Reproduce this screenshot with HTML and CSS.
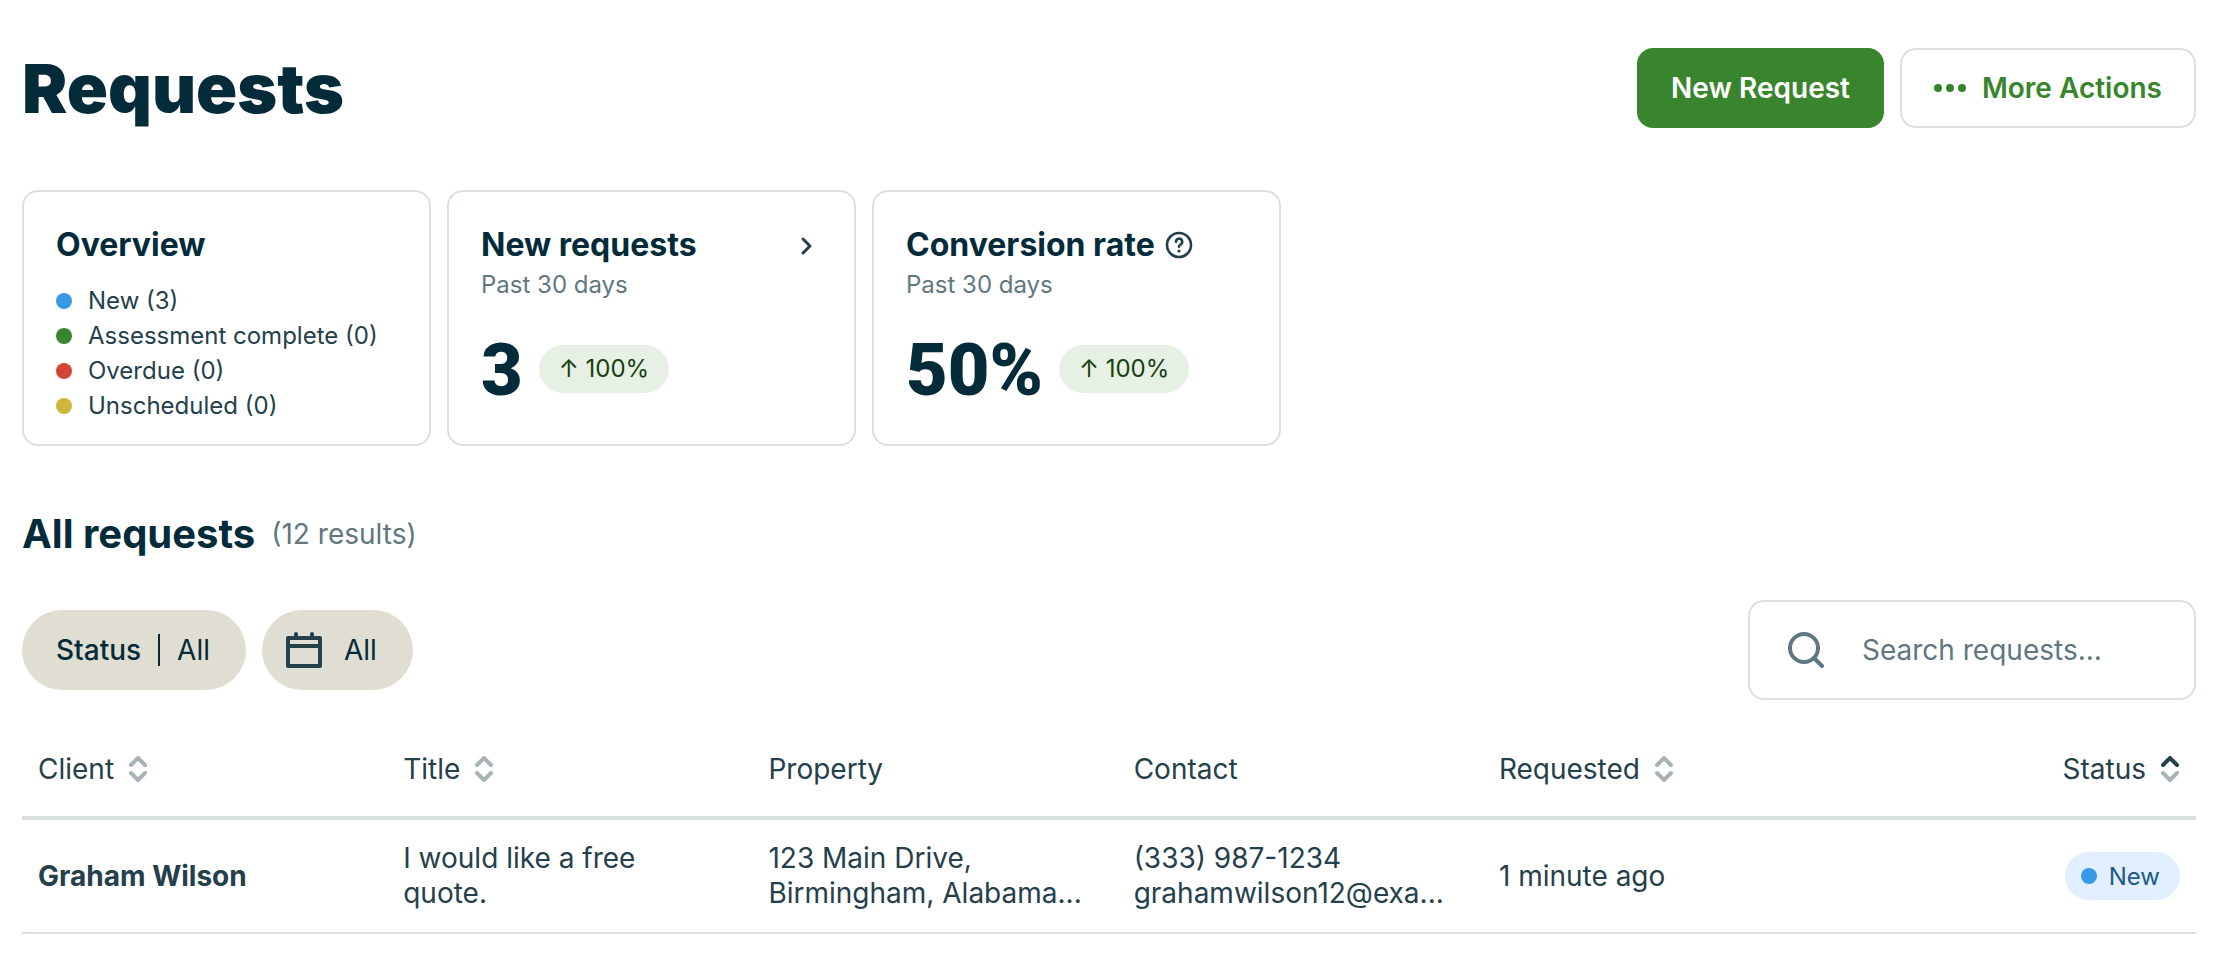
FILE: index.html
```html
<!DOCTYPE html>
<html lang="en">
<head>
    <meta charset="UTF-8">
    <meta name="viewport" content="width=device-width, initial-scale=1.0">
    <title>Requests</title>
    <link rel="stylesheet" href="styles.css">
</head>
<body>
    <header class="page-header">
        <h1>Requests</h1>
        <div class="actions">
            <button type="button" class="btn btn-primary">New Request</button>
            <button type="button" class="btn btn-secondary">
                <svg width="34" height="10" viewBox="0 0 34 10" fill="currentColor" aria-hidden="true">
                    <circle cx="4" cy="5" r="4"/><circle cx="16" cy="5" r="4"/><circle cx="28" cy="5" r="4"/>
                </svg>
                More Actions
            </button>
        </div>
    </header>

    <section class="cards">
        <div class="card">
            <h2>Overview</h2>
            <ul class="overview-list">
                <li><span class="dot dot-blue"></span>New (3)</li>
                <li><span class="dot dot-green"></span>Assessment complete (0)</li>
                <li><span class="dot dot-red"></span>Overdue (0)</li>
                <li><span class="dot dot-yellow"></span>Unscheduled (0)</li>
            </ul>
        </div>
        <a class="card" href="#new-requests">
            <div class="card-title">
                <h2>New requests</h2>
                <svg class="chevron" width="32" height="32" viewBox="0 0 32 32" fill="none" stroke="currentColor" stroke-width="3" stroke-linecap="round" stroke-linejoin="round" aria-hidden="true">
                    <path d="M13 10l7 7-7 7"/>
                </svg>
            </div>
            <p class="period">Past 30 days</p>
            <div class="metric"><strong>3</strong><span class="trend">↑ 100%</span></div>
        </a>
        <div class="card">
            <div class="card-title">
                <h2>Conversion rate</h2>
                <svg width="28" height="28" viewBox="0 0 28 28" fill="none" stroke="currentColor" stroke-width="2.6" stroke-linecap="round" stroke-linejoin="round" aria-hidden="true">
                    <circle cx="14" cy="14" r="12"/>
                    <path d="M11 10.8a3.1 3.1 0 1 1 4.6 2.7c-1 .6-1.6 1.1-1.6 2.3"/>
                    <circle cx="14" cy="20" r="1.6" fill="currentColor" stroke="none"/>
                </svg>
            </div>
            <p class="period">Past 30 days</p>
            <div class="metric"><strong>50%</strong><span class="trend">↑ 100%</span></div>
        </div>
    </section>

    <section>
        <div class="list-title">
            <h2>All requests</h2>
            <span>(12 results)</span>
        </div>

        <div class="toolbar">
            <div class="filters">
                <button type="button" class="chip"><span class="chip-label">Status</span><span class="chip-divider"></span>All</button>
                <button type="button" class="chip chip-date" aria-label="Date: All">
                    <svg width="36" height="36" viewBox="0 0 36 36" fill="none" stroke="currentColor" stroke-width="4" stroke-linecap="round" stroke-linejoin="round" aria-hidden="true">
                        <path d="M2 6h32v28H2zM2 14h32M10 2v4M26 2v4"/>
                    </svg>
                    All
                </button>
            </div>
            <label class="search">
                <svg width="36" height="36" viewBox="0 0 36 36" fill="none" stroke="currentColor" stroke-width="4" stroke-linecap="round" aria-hidden="true">
                    <circle cx="16" cy="16" r="14"/>
                    <path d="M26 26l8 8"/>
                </svg>
                <input type="search" placeholder="Search requests..." aria-label="Search requests">
            </label>
        </div>

        <table class="requests">
            <thead>
                <tr>
                    <th scope="col"><button type="button" class="sort">Client
                        <svg width="20" height="26" viewBox="0 0 20 26" aria-hidden="true"><path class="up" d="M3 9l7-7 7 7"/><path class="down" d="M3 17l7 7 7-7"/></svg></button></th>
                    <th scope="col"><button type="button" class="sort">Title
                        <svg width="20" height="26" viewBox="0 0 20 26" aria-hidden="true"><path class="up" d="M3 9l7-7 7 7"/><path class="down" d="M3 17l7 7 7-7"/></svg></button></th>
                    <th scope="col">Property</th>
                    <th scope="col">Contact</th>
                    <th scope="col"><button type="button" class="sort">Requested
                        <svg width="20" height="26" viewBox="0 0 20 26" aria-hidden="true"><path class="up" d="M3 9l7-7 7 7"/><path class="down" d="M3 17l7 7 7-7"/></svg></button></th>
                    <th scope="col" class="col-status"><button type="button" class="sort sort-asc">Status
                        <svg width="20" height="26" viewBox="0 0 20 26" aria-hidden="true"><path class="up" d="M3 9l7-7 7 7"/><path class="down" d="M3 17l7 7 7-7"/></svg></button></th>
                </tr>
            </thead>
            <tbody>
                <tr>
                    <td class="client">Graham Wilson</td>
                    <td>I would like a free quote.</td>
                    <td>123 Main Drive,<br>Birmingham, Alabama...</td>
                    <td>(333) 987-1234<br>grahamwilson12@exa...</td>
                    <td>1 minute ago</td>
                    <td class="col-status"><span class="status"><span class="dot dot-blue"></span>New</span></td>
                </tr>
            </tbody>
        </table>
    </section>
</body>
</html>
```
FILE: styles.css
```css
* {
    box-sizing: border-box;
}
body {
    margin: 0;
    padding: 48px 30px 24px 22px;
    font-family: Inter, "Liberation Sans", sans-serif;
    font-size: 28px;
    line-height: 35px;
    color: #24404b;
    background: #fff;
}
h1, h2, p, ul {
    margin: 0;
    padding: 0;
}
h1, h2 {
    color: #032b3a;
}
button, input {
    font: inherit;
    color: inherit;
}
button {
    border: 0;
    background: none;
    cursor: pointer;
}
svg {
    flex: none;
}

/* header */
.page-header {
    display: flex;
    justify-content: space-between;
    align-items: center;
    margin-bottom: 62px;
}
h1 {
    font-size: 68px;
    line-height: 80px;
    font-weight: 900;
}
.actions {
    display: flex;
    gap: 16px;
}
.btn {
    display: flex;
    align-items: center;
    gap: 16px;
    height: 80px;
    padding: 0 32px;
    border: 2px solid #38852d;
    border-radius: 16px;
    font-weight: 600;
}
.btn-primary {
    background: #38852d;
    color: #fff;
}
.btn-secondary {
    gap: 14px;
    border-color: #dadfe1;
    color: #38852d;
}

/* cards */
.cards {
    display: grid;
    grid-template-columns: repeat(3, 1fr);
    gap: 16px;
    max-width: 1259px;
    margin-bottom: 64px;
}
.card {
    min-height: 256px;
    padding: 33px 32px 15px;
    border: 2px solid #dadfe1;
    border-radius: 16px;
    color: inherit;
    text-decoration: none;
}
.card h2 {
    font-size: 32px;
    line-height: 40px;
}
.card-title {
    display: flex;
    align-items: center;
    gap: 10px;
}
.chevron {
    margin-left: auto;
}
.overview-list {
    margin-top: 18px;
    list-style: none;
    font-size: 24px;
}
.overview-list li {
    display: flex;
    align-items: center;
    gap: 16px;
}
.dot {
    flex: none;
    width: 16px;
    height: 16px;
    border-radius: 50%;
}
.dot-blue {
    background: #3899e8;
}
.dot-green {
    background: #38852d;
}
.dot-red {
    background: #d54335;
}
.dot-yellow {
    background: #cdb63a;
}
.period {
    margin-top: 4px;
    font-size: 24px;
    line-height: 32px;
    color: #5f7780;
}
.metric {
    display: flex;
    align-items: center;
    gap: 16px;
    margin-top: 32px;
}
.metric strong {
    padding-top: 4px;
    font-family: Roboto, Inter, sans-serif;
    font-size: 72px;
    line-height: 68px;
    font-weight: 900;
    color: #032b3a;
}
.trend {
    padding: 0 20px;
    border-radius: 24px;
    background: #e7f0e5;
    color: #173f11;
    font-size: 24px;
    line-height: 48px;
}

/* list heading and filters */
.list-title {
    display: flex;
    align-items: center;
    gap: 16px;
    margin-bottom: 42px;
}
.list-title h2 {
    font-size: 40px;
    line-height: 48px;
}
.list-title span {
    color: #5f7780;
}
.toolbar {
    display: flex;
    justify-content: space-between;
    align-items: center;
    margin-bottom: 32px;
}
.filters {
    display: flex;
    gap: 16px;
}
.chip {
    display: flex;
    align-items: center;
    gap: 17px;
    height: 80px;
    padding: 0 36px 0 34px;
    border-radius: 40px;
    background: #e0ddd2;
    color: #032b3a;
}
.chip-label {
    font-weight: 500;
}
.chip-divider {
    width: 2px;
    height: 32px;
    background: #032b3a;
}
.chip-date {
    gap: 22px;
    padding-left: 24px;
}
.chip-date svg {
    color: #24404b;
}
.search {
    display: flex;
    align-items: center;
    gap: 38px;
    width: 448px;
    height: 100px;
    padding: 0 38px;
    border: 2px solid #dadfe1;
    border-radius: 16px;
    color: #5f7780;
}
.search input {
    flex: 1;
    min-width: 0;
    padding: 0;
    border: 0;
    outline: 0;
    background: none;
}
.search input::placeholder {
    color: #5f7780;
    opacity: 1;
}

/* table */
.requests {
    width: 100%;
    table-layout: fixed;
    border-collapse: separate;
    border-spacing: 0;
}
.requests th {
    width: 16.8%;
    height: 88px;
    padding: 0 16px 10px;
    border-bottom: 4px solid #dadfe1;
    font-weight: 400;
    text-align: left;
}
.requests th.col-status {
    width: auto;
}
.requests td {
    height: 114px;
    padding: 0 32px 0 16px;
    border-bottom: 2px solid #dadfe1;
}
.requests .col-status {
    padding-right: 16px;
    text-align: right;
}
.requests .client {
    font-weight: 700;
}
.sort {
    display: inline-flex;
    align-items: center;
    gap: 14px;
    padding: 0;
}
.sort path {
    fill: none;
    stroke: #a7b3b7;
    stroke-width: 4;
    stroke-linecap: round;
    stroke-linejoin: miter;
}
.sort-asc .up {
    stroke: #24404b;
}
.status {
    display: inline-flex;
    align-items: center;
    gap: 12px;
    height: 48px;
    padding: 0 20px 0 16px;
    border-radius: 24px;
    background: #e1effe;
    color: #1e5a8a;
    font-size: 24px;
    vertical-align: middle;
}
```
